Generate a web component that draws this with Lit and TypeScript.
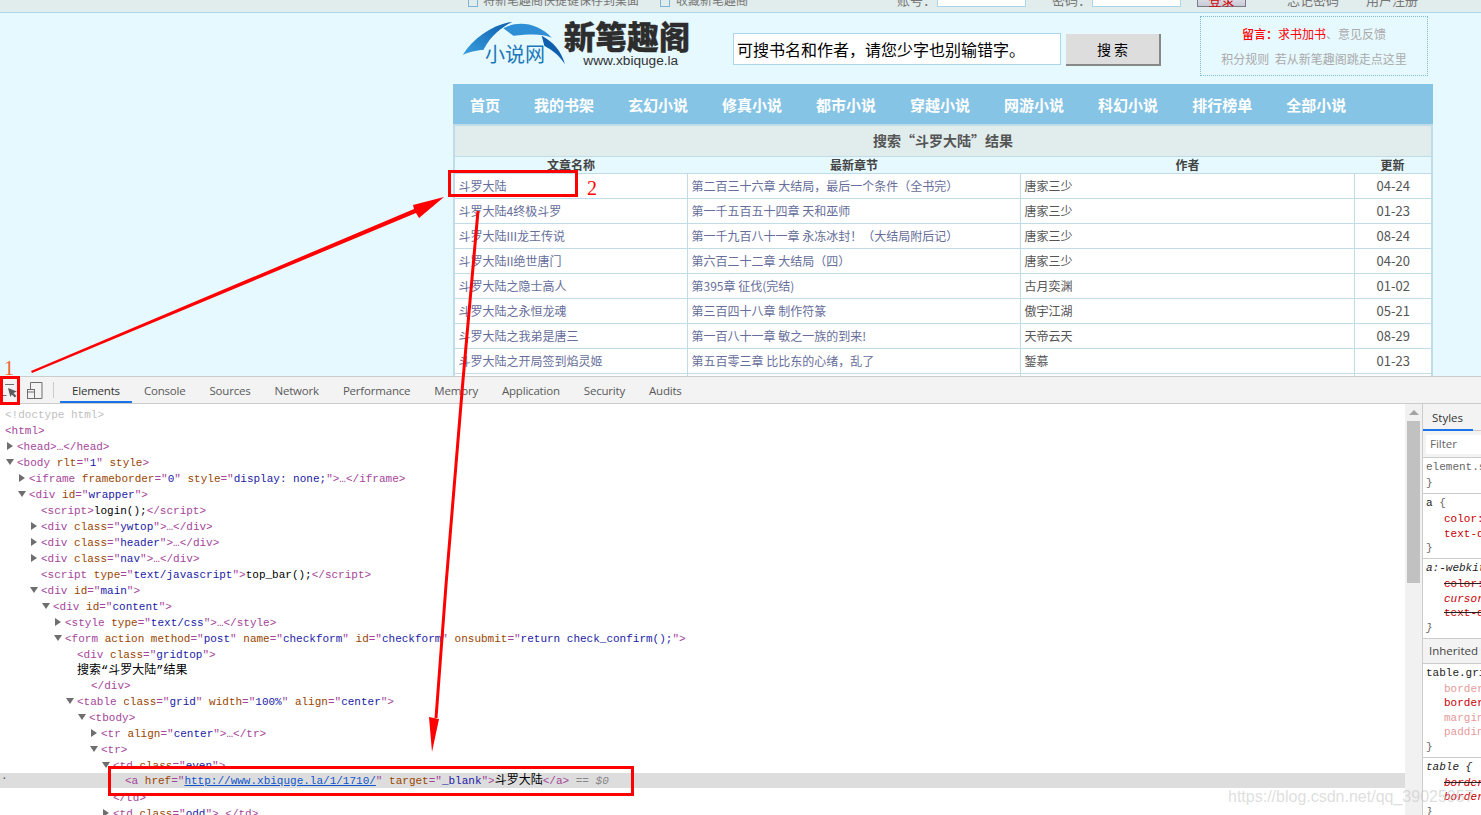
import { LitElement, css, html } from "lit";
import { customElement } from "lit/decorators.js";

const NAV = ["首页", "我的书架", "玄幻小说", "修真小说", "都市小说", "穿越小说", "网游小说", "科幻小说", "排行榜单", "全部小说"];

const BOOKS = [
  ["斗罗大陆", "第二百三十六章 大结局\uff0c最后一个条件\uff08全书完\uff09", "唐家三少", "04-24"],
  ["斗罗大陆4终极斗罗", "第一千五百五十四章 天和巫师", "唐家三少", "01-23"],
  ["斗罗大陆III龙王传说", "第一千九百八十一章 永冻冰封\uff01\uff08大结局附后记\uff09", "唐家三少", "08-24"],
  ["斗罗大陆II绝世唐门", "第六百二十二章 大结局\uff08四\uff09", "唐家三少", "04-20"],
  ["斗罗大陆之隐士高人", "第395章 征伐(完结)", "古月奕渊", "01-02"],
  ["斗罗大陆之永恒龙魂", "第三百四十八章 制作符篆", "傲宇江湖", "05-21"],
  ["斗罗大陆之我弟是唐三", "第一百八十一章 敏之一族的到来!", "天帝云天", "08-29"],
  ["斗罗大陆之开局签到焰灵姬", "第五百零三章 比比东的心绪\uff0c乱了", "錾慕", "01-23"],
  ["", "", "", ""],
];

@customElement("site-view")
export class SiteView extends LitElement {
  render() {
    return html`
      <div class="topbar">
        <div class="topbar-row">
          <i class="mini-icon"></i><span class="lead">将新笔趣阁快捷键保存到桌面</span>
          <i class="mini-icon second"></i><span class="lead">收藏新笔趣阁</span>
          <span class="field-label user">账号\uff1a</span><input class="top-input" />
          <span class="field-label pass">密码\uff1a</span><input class="top-input" />
          <button class="login">登录</button>
          <span class="top-link forgot">忘记密码</span>
          <span class="top-link register">用户注册</span>
        </div>
      </div>
      <div class="header">
        <svg class="logo" viewBox="0 0 720 180">
          <defs>
            <linearGradient id="blade" x1="0" y1="1" x2="1" y2="0">
              <stop offset="0" stop-color="#3aa0de" />
              <stop offset="1" stop-color="#0b5cad" />
            </linearGradient>
          </defs>
          <path d="M23 120C55 70 110 30 172 20C150 32 110 55 85 105C65 105 40 112 23 120Z" fill="url(#blade)" />
          <path d="M145 40C190 15 250 25 290 68C260 55 225 58 175 62C165 55 155 47 145 40Z" fill="#2f8fd6" />
          <path d="M260 62C295 80 320 110 330 148C312 118 290 105 268 92Z" fill="#0f5fae" />
          <text class="logo-cn" x="90" y="142">小说网</text>
          <text class="logo-name" x="326" y="102">新笔趣阁</text>
          <text class="logo-url" x="385" y="150">www.xbiquge.la</text>
        </svg>
        <input class="search" value="可搜书名和作者\uff0c请您少字也别输错字。" />
        <button class="search-btn">搜 索</button>
        <div class="notice">
          <div><span class="hot"><b>留言\uff1a</b>求书加书</span>、意见反馈</div>
          <div>积分规则 &nbsp;若从新笔趣阁跳走点这里</div>
        </div>
      </div>
      <div class="nav">${NAV.map((n) => html`<span>${n}</span>`)}</div>
      <div class="grid-wrap">
        <div class="gridtop">搜索“斗罗大陆”结果</div>
        <table>
          <colgroup><col class="c1" /><col class="c2" /><col class="c3" /><col /></colgroup>
          <thead><tr><th>文章名称</th><th>最新章节</th><th>作者</th><th>更新</th></tr></thead>
          <tbody>
            ${BOOKS.map(
              (b) => html`<tr>
                <td class="link">${b[0]}</td>
                <td class="link">${b[1]}</td>
                <td>${b[2]}</td>
                <td class="date">${b[3]}</td>
              </tr>`
            )}
          </tbody>
        </table>
      </div>
    `;
  }

  static styles = css`
    :host {
      display: block;
      height: 376px;
      overflow: hidden;
      background: #e6f9ff;
      font-family: "Noto Sans CJK SC", sans-serif;
      font-size: 12px;
      color: #555;
    }
    .topbar {
      height: 12px;
      background: #e1ecec;
      border-bottom: 1px solid #a9d6ea;
      overflow: hidden;
    }
    .topbar-row {
      display: flex;
      align-items: center;
      height: 22px;
      margin-top: -12px;
      padding-left: 468px;
      color: #777;
    }
    .mini-icon {
      width: 8px;
      height: 14px;
      border: 1px solid #7fb4d8;
      margin-right: 5px;
    }
    .mini-icon.second { margin-left: 21px; margin-right: 6px; }
    .field-label { font-size: 13px; width: 40px; }
    .field-label.user { margin-left: 149px; }
    .field-label.pass { margin-left: 26px; }
    .top-input {
      align-self: flex-start;
      width: 89px;
      height: 18px;
      box-sizing: border-box;
      margin-top: 1px;
      padding: 0;
      border: 1px solid #a9d6ea;
      background: #fff;
    }
    .login {
      align-self: flex-start;
      width: 49px;
      height: 18px;
      margin: 1px 0 0 16px;
      padding: 0;
      border: 1px solid #7a7a8c;
      background: linear-gradient(#f5f5f8, #c9c9d6);
      color: #c00;
      font: 13px "Noto Sans CJK SC", sans-serif;
    }
    .top-link { font-size: 13px; }
    .forgot { margin-left: 41px; }
    .register { margin-left: 27px; }

    .header {
      display: flex;
      align-items: flex-start;
      height: 71px;
      padding-left: 455px;
    }
    .logo {
      flex: none;
      width: 240px;
      height: 60px;
      margin-top: 2px;
    }
    .logo-cn { font-size: 60px; fill: #1a78b8; }
    .logo-name { font-size: 95px; font-weight: 900; fill: #2d2d2d; stroke: #2d2d2d; stroke-width: 1; }
    .logo-url { font: 41px "Liberation Sans", sans-serif; fill: #333; }
    .search {
      width: 328px;
      height: 32px;
      box-sizing: border-box;
      margin: 20px 0 0 38px;
      padding: 0 3px;
      border: 1px solid #a9d6ea;
      background: #fff;
      color: #000;
      font: 16px "Noto Sans CJK SC", sans-serif;
    }
    .search-btn {
      width: 95px;
      height: 32px;
      box-sizing: border-box;
      margin: 21px 0 0 5px;
      padding: 0;
      border: 0;
      border-right: 2px solid #888;
      border-bottom: 2px solid #888;
      background: #ddd;
      color: #000;
      font: 14px "Noto Sans CJK SC", sans-serif;
    }
    .notice {
      width: 228px;
      height: 60px;
      box-sizing: border-box;
      margin: 3px 0 0 39px;
      padding-top: 4px;
      border: 1px dotted #7fb9d6;
      color: #aaa;
      line-height: 25px;
      text-align: center;
    }
    .hot { color: #f00; }
    .hot b { font-weight: 500; }

    .nav {
      display: flex;
      align-items: center;
      width: 980px;
      height: 40px;
      margin-left: 453px;
      background: #86c4e5;
      color: #fff;
      font-size: 15px;
      font-weight: 700;
    }
    .nav span { padding: 0 17px; }

    .grid-wrap {
      width: 980px;
      margin-left: 453px;
      box-sizing: border-box;
      border: 2px solid #c0dce8;
      border-bottom: 0;
    }
    .gridtop {
      height: 30px;
      border-bottom: 1px solid #c0dce8;
      background: #e1ecec;
      color: #555;
      font-size: 14px;
      font-weight: 700;
      line-height: 29px;
      text-align: center;
    }
    table {
      width: 976px;
      table-layout: fixed;
      border-collapse: separate;
      border-spacing: 0;
    }
    .c1 { width: 233px; }
    .c2 { width: 333px; }
    .c3 { width: 334px; }
    th {
      height: 16px;
      padding: 0 1px 0 0;
      border-bottom: 1px solid #c0dce8;
      color: #444;
      font-size: 12px;
      font-weight: 700;
      line-height: 16px;
    }
    td {
      height: 23px;
      padding: 0 3px 1px 3.5px;
      border-right: 1px solid #c0dce8;
      border-bottom: 1px solid #c0dce8;
      background: #fff;
      line-height: 23px;
      white-space: nowrap;
    }
    td:last-child { border-right: 0; }
    .link { color: #666d9a; }
    .date { font-size: 13px; text-align: center; }
  `;
}

const tag = (name: string, attrs: unknown = "", close = true) =>
  html`<span class="t">&lt;${name}</span>${attrs}<span class="t">${close ? ">" : ""}</span>`;
const attr = (name: string, value?: string) =>
  html` <span class="n">${name}</span>${value === undefined
    ? ""
    : html`<span class="t">="</span><span class="v">${value}</span><span class="t">"</span>`}`;
const end = (name: string) => html`<span class="t">&lt;/${name}></span>`;
const fold = (name: string, attrs: unknown = "") => html`${tag(name, attrs)}<span class="t">…</span>${end(name)}`;

type TreeLine = { x: number; arrow?: "open" | "shut"; body: unknown; cls?: string };

const TREE: TreeLine[] = [
  { x: 5, body: html`<span class="d">&lt;!doctype html></span>` },
  { x: 5, body: tag("html") },
  { x: 17, arrow: "shut", body: fold("head") },
  { x: 17, arrow: "open", body: tag("body", html`${attr("rlt", "1")}${attr("style")}`) },
  { x: 29, arrow: "shut", body: fold("iframe", html`${attr("frameborder", "0")}${attr("style", "display: none;")}`) },
  { x: 29, arrow: "open", body: tag("div", attr("id", "wrapper")) },
  { x: 41, body: html`${tag("script")}login();${end("script")}` },
  { x: 41, arrow: "shut", body: fold("div", attr("class", "ywtop")) },
  { x: 41, arrow: "shut", body: fold("div", attr("class", "header")) },
  { x: 41, arrow: "shut", body: fold("div", attr("class", "nav")) },
  { x: 41, body: html`${tag("script", attr("type", "text/javascript"))}top_bar();${end("script")}` },
  { x: 41, arrow: "open", body: tag("div", attr("id", "main")) },
  { x: 53, arrow: "open", body: tag("div", attr("id", "content")) },
  { x: 65, arrow: "shut", body: fold("style", attr("type", "text/css")) },
  {
    x: 65,
    arrow: "open",
    body: tag(
      "form",
      html`${attr("action")}${attr("method", "post")}${attr("name", "checkform")}${attr("id", "checkform")}${attr("onsubmit", "return check_confirm();")}`
    ),
  },
  { x: 77, body: tag("div", attr("class", "gridtop")) },
  { x: 77, body: html`<span class="cn">搜索“斗罗大陆”结果</span>`, cls: "short" },
  { x: 91, body: end("div") },
  { x: 77, arrow: "open", body: tag("table", html`${attr("class", "grid")}${attr("width", "100%")}${attr("align", "center")}`) },
  { x: 89, arrow: "open", body: tag("tbody") },
  { x: 101, arrow: "shut", body: fold("tr", attr("align", "center")) },
  { x: 101, arrow: "open", body: tag("tr") },
  { x: 113, arrow: "open", body: tag("td", attr("class", "even")) },
  {
    x: 125,
    cls: "picked",
    body: html`<span class="t">&lt;a</span> <span class="n">href</span><span class="t">="</span><span class="u">http://www.xbiquge.la/1/1710/</span><span class="t">"</span>${attr("target", "_blank")}<span class="t">></span><span class="cn">斗罗大陆</span>${end("a")} <span class="eq">== $0</span>`,
  },
  { x: 113, body: end("td") },
  { x: 113, arrow: "shut", body: fold("td", attr("class", "odd")) },
];

const TABS = ["Elements", "Console", "Sources", "Network", "Performance", "Memory", "Application", "Security", "Audits"];

@customElement("dev-tools")
export class DevTools extends LitElement {
  private line(l: TreeLine) {
    return html`<div class="line ${l.cls ?? ""}" style="padding-left:${l.arrow ? l.x - 12 : l.x}px">
      ${l.arrow ? html`<i class="tri ${l.arrow}"></i>` : ""}<span class="code">${l.body}</span>
    </div>`;
  }

  render() {
    return html`
      <div class="toolbar">
        <svg class="ico" width="16" height="16" viewBox="0 0 16 16">
          <path d="M.5 9.500v4h4M3 2.500h9" fill="none" stroke="#6e6e6e" />
          <path d="M6 6l9 3.500-3.600 1.400 3 3-1.600 1.600-3-3L8.400 15Z" fill="#5a5a5a" />
        </svg>
        <svg class="ico device" width="16" height="17" viewBox="0 0 16 17">
          <path d="M3.500 7V.5h11.500v16H8" fill="none" stroke="#6e6e6e" />
          <rect x=".5" y="7.500" width="7" height="9" fill="none" stroke="#6e6e6e" />
          <path d="M1 10h6" stroke="#6e6e6e" />
        </svg>
        <i class="sep"></i>
        <div class="tabs">
          ${TABS.map((t, i) => html`<span class=${i === 0 ? "tab on" : "tab"}>${t}</span>`)}
        </div>
      </div>
      <div class="body">
        <div class="tree">
          ${TREE.map((l) => this.line(l))}
          <span class="dot">·</span>
        </div>
        <div class="scroll"><i class="up"></i><i class="thumb"></i></div>
        <div class="side">
          <div class="side-tab"><span>Styles</span></div>
          <div class="filter"><span>Filter</span></div>
          <div class="rule">
            <div class="sel g">element.style {</div>
            <div class="g">}</div>
          </div>
          <div class="rule">
            <div class="sel">a <span class="g">{</span></div>
            <div class="p">color: #5b7a9a;</div>
            <div class="p">text-decoration: none;</div>
            <div class="g">}</div>
          </div>
          <div class="rule">
            <div class="sel"><em>a:-webkit-any-link {</em></div>
            <div class="p"><s>color: -webkit-link;</s></div>
            <div class="p"><em>cursor: pointer;</em></div>
            <div class="p"><s>text-decoration: underline;</s></div>
            <div class="g"><em>}</em></div>
          </div>
          <div class="inherited">Inherited from table.grid</div>
          <div class="rule">
            <div class="sel">table.grid {</div>
            <div class="p faint">border-collapse: collapse;</div>
            <div class="p">border: 2px solid #c0dce8;</div>
            <div class="p faint">margin: 0 auto;</div>
            <div class="p faint">padding: 0;</div>
            <div class="g">}</div>
          </div>
          <div class="rule">
            <div class="sel"><em>table {</em></div>
            <div class="p"><s><em>border-collapse: separate;</em></s></div>
            <div class="p"><em>border-spacing: 2px;</em></div>
            <div class="g"><em>}</em></div>
          </div>
        </div>
      </div>
    `;
  }

  static styles = css`
    :host {
      display: flex;
      flex-direction: column;
      flex: 1;
      min-height: 0;
      background: #fff;
      overflow: hidden;
    }
    .toolbar {
      display: flex;
      align-items: center;
      flex: none;
      height: 28px;
      box-sizing: border-box;
      border-top: 1px solid #ccc;
      border-bottom: 1px solid #ccc;
      background: #f3f3f3;
      padding-left: 2px;
    }
    .ico { flex: none; }
    .device { margin-left: 9px; }
    .sep {
      width: 1px;
      height: 16px;
      margin: 0 6px 0 10px;
      background: #ccc;
    }
    .tabs { display: flex; height: 100%; }
    .tab {
      padding: 0 12px;
      color: #5a5a5a;
      font: 11.5px/27px "Open Sans", sans-serif;
      letter-spacing: -0.2px;
    }
    .tab.on {
      color: #333;
      height: 24px;
      border-bottom: 2px solid #1a73e8;
    }
    .body {
      position: relative;
      display: flex;
      flex: 1;
      min-height: 0;
    }
    .tree {
      flex: 1;
      min-width: 0;
      padding-top: 2px;
      overflow: hidden;
      font: 11px/16px "Liberation Mono", "Noto Sans CJK SC", monospace;
      color: #000;
    }
    .line {
      display: flex;
      align-items: center;
      height: 16px;
      white-space: pre;
    }
    .code { padding-top: 2px; }
    .line.short { height: 15px; }
    .line.picked { height: 15px; margin-bottom: 1px; background: #ddd; }
    .line.picked .code { padding-top: 0; }
    .tri {
      flex: none;
      width: 12px;
      height: 8px;
      box-sizing: border-box;
      position: relative;
    }
    .tri::before {
      content: "";
      display: block;
      width: 0;
      height: 0;
      margin-left: 2px;
    }
    .tri.shut::before {
      border-left: 6px solid #6e6e6e;
      border-top: 4px solid transparent;
      border-bottom: 4px solid transparent;
    }
    .tri.open::before {
      margin-left: 1px;
      margin-top: 1px;
      border-top: 6px solid #6e6e6e;
      border-left: 4px solid transparent;
      border-right: 4px solid transparent;
    }
    .d { color: #c0c0c0; }
    .t { color: #a5459a; }
    .n { color: #994500; }
    .v { color: #1a1aa6; }
    .u { color: #1155cc; text-decoration: underline; }
    .eq { color: #888; font-style: italic; }
    .cn { color: #000; font: 12px/15px "Liberation Mono", "Noto Sans CJK SC", monospace; }
    .dot { position: absolute; left: 1px; top: 368px; color: #555; font: 11px "Liberation Mono", monospace; }
    .scroll {
      position: relative;
      flex: none;
      width: 17px;
      background: #f1f1f1;
    }
    .up {
      display: block;
      width: 0;
      height: 0;
      margin: 6px auto 0;
      border-bottom: 5px solid #a3a3a3;
      border-left: 5px solid transparent;
      border-right: 5px solid transparent;
    }
    .thumb {
      display: block;
      width: 13px;
      height: 162px;
      margin: 6px auto 0;
      background: #c1c1c1;
    }
    .side {
      flex: none;
      width: 59px;
      box-sizing: border-box;
      border-left: 1px solid #ccc;
      overflow: hidden;
      white-space: nowrap;
      font: 11px/14.4px "Liberation Mono", monospace;
      color: #222;
    }
    .side-tab {
      height: 26px;
      border-bottom: 1px solid #ccc;
      background: #f3f3f3;
      font: 11.5px/28px "Open Sans", sans-serif;
      color: #333;
    }
    .side-tab span {
      display: block;
      width: 41px;
      height: 25px;
      padding-left: 9px;
      border-bottom: 2px solid #1a73e8;
    }
    .filter {
      height: 27px;
      box-sizing: border-box;
      padding: 4px 0 3px 3px;
      border-bottom: 1px solid #ccc;
      background: #f3f3f3;
      font: 11.5px/18px "Open Sans", sans-serif;
      color: #666;
    }
    .filter span { display: block; padding-left: 4px; background: #fff; height: 19px; }
    .rule {
      padding: 2px 0 3px 3px;
      border-bottom: 1px solid #ccc;
    }
    .sel { margin-bottom: 1.5px; }
    .g { color: #666; }
    .p { padding-left: 18px; color: #c80000; }
    .p.faint { color: #e89a9a; }
    .p s { color: #c80000; text-decoration-color: #222; }
    .inherited {
      height: 24px;
      border-bottom: 1px solid #ccc;
      padding-left: 6px;
      background: #f3f3f3;
      font: 11.5px/24px "Open Sans", sans-serif;
      color: #444;
    }
  `;
}

@customElement("app-root")
export class AppRoot extends LitElement {
  render() {
    return html`
      <site-view></site-view>
      <dev-tools></dev-tools>
      <svg class="marks" width="1481" height="815" viewBox="0 0 1481 815">
        <text class="num one" x="4" y="375">1</text>
        <text class="num two" x="587" y="195">2</text>
        <rect x="1.500" y="377.500" width="17" height="26" class="box" />
        <rect x="449.500" y="171.500" width="127" height="24" class="box" />
        <rect x="109.500" y="767.500" width="523" height="27" class="box" />
        <path d="M31 371L414 209 413 205 444 197 419 218 416 213 32 373Z" fill="#f00" />
        <path d="M478 211L463 380 446 585 436 718" class="pen" />
        <path d="M429 717L439 719 432 752Z" fill="#f00" />
      </svg>
      <span class="mark-water">https://blog.csdn.net/qq_39025957</span>
    `;
  }

  static styles = css`
    :host {
      position: relative;
      display: flex;
      flex-direction: column;
      height: 815px;
      overflow: hidden;
    }
    .marks {
      position: absolute;
      left: 0;
      top: 0;
      pointer-events: none;
    }
    .box { fill: none; stroke: #f00; stroke-width: 3; }
    .pen { fill: none; stroke: #f00; stroke-width: 3; }
    .num { font: 20px "Liberation Serif", serif; }
    .one { fill: #f4602a; }
    .two { fill: #f00; }
    .mark-water {
      position: absolute;
      left: 1228px;
      top: 788px;
      color: rgba(200, 200, 200, 0.6);
      font: 16px "Liberation Sans", sans-serif;
      white-space: nowrap;
      pointer-events: none;
    }
  `;
}
